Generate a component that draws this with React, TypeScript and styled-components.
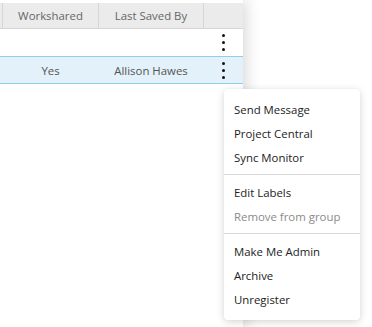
import { FC } from 'react';
import styled, { createGlobalStyle } from 'styled-components';

const GlobalStyle = createGlobalStyle`
  html, body { margin: 0; padding: 0; background: #fff; }
  body {
    width: 372px;
    height: 327px;
    overflow: hidden;
    font-family: "Open Sans", "Noto Sans", sans-serif;
  }
`;

const Page = styled.div`
  position: relative;
  width: 372px;
  height: 327px;
  overflow: hidden;
  background: #fff;
`;

const Panel = styled.div`
  width: 243px;
  height: 327px;
  background: #fff;
  box-shadow: 3px 0 14px rgba(0, 0, 0, 0.16);
  padding-top: 3px;
  box-sizing: border-box;
`;

const Table = styled.div`
  display: flex;
  flex-direction: column;
`;

const Row = styled.div<{ $header?: boolean; $selected?: boolean }>`
  display: grid;
  grid-template-columns: 3px 96px 105px 1fr;
  height: ${p => (p.$header ? '25px' : '26px')};
  align-items: stretch;
  background: ${p => (p.$header ? '#ebebeb' : p.$selected ? '#e2f1fa' : '#fff')};
  border-bottom: 1px solid ${p => (p.$header ? '#d6d6d6' : p.$selected ? '#90cdee' : 'transparent')};
  border-top: ${p => (p.$selected ? '1px solid #90cdee' : 'none')};
`;

const Cell = styled.div<{ $header?: boolean }>`
  display: flex;
  align-items: center;
  justify-content: center;
  font-size: 11.4px;
  color: ${p => (p.$header ? '#666' : '#555')};
  border-right: 1px solid ${p => (p.$header ? '#d6d6d6' : 'transparent')};
  white-space: nowrap;
`;

const LastCell = styled(Cell)`
  border-right: none;
`;

const Kebab = styled.div`
  display: flex;
  flex-direction: column;
  gap: 4px;
  span {
    width: 3px;
    height: 3px;
    border-radius: 50%;
    background: #111;
  }
`;

const Menu = styled.div`
  position: absolute;
  left: 224px;
  top: 89px;
  width: 136px;
  background: #fff;
  border-radius: 4px;
  box-shadow: 0 2px 8px rgba(0, 0, 0, 0.16), 0 0 2px rgba(0, 0, 0, 0.06);
  padding: 8px 0 9px;
  box-sizing: border-box;
`;

const Item = styled.div<{ $disabled?: boolean }>`
  height: 24px;
  display: flex;
  align-items: center;
  padding-left: 10px;
  font-size: 11.4px;
  color: ${p => (p.$disabled ? '#8a8a8a' : '#222')};
  white-space: nowrap;
`;

const Divider = styled.div`
  height: 1px;
  background: #d9d9d9;
  margin: 5px 0;
`;

const Dots: FC = () => (
  <Kebab>
    <span />
    <span />
    <span />
  </Kebab>
);

export default function App() {
  return (
    <Page>
      <GlobalStyle />
      <Panel>
        <Table>
          <Row $header>
            <Cell $header />
            <Cell $header>Workshared</Cell>
            <Cell $header>Last Saved By</Cell>
            <LastCell $header />
          </Row>
          <Row>
            <Cell />
            <Cell />
            <Cell />
            <LastCell><Dots /></LastCell>
          </Row>
          <Row $selected>
            <Cell />
            <Cell>Yes</Cell>
            <Cell>Allison Hawes</Cell>
            <LastCell><Dots /></LastCell>
          </Row>
        </Table>
      </Panel>
      <Menu>
        <Item>Send Message</Item>
        <Item>Project Central</Item>
        <Item>Sync Monitor</Item>
        <Divider />
        <Item>Edit Labels</Item>
        <Item $disabled>Remove from group</Item>
        <Divider />
        <Item>Make Me Admin</Item>
        <Item>Archive</Item>
        <Item>Unregister</Item>
      </Menu>
    </Page>
  );
}
